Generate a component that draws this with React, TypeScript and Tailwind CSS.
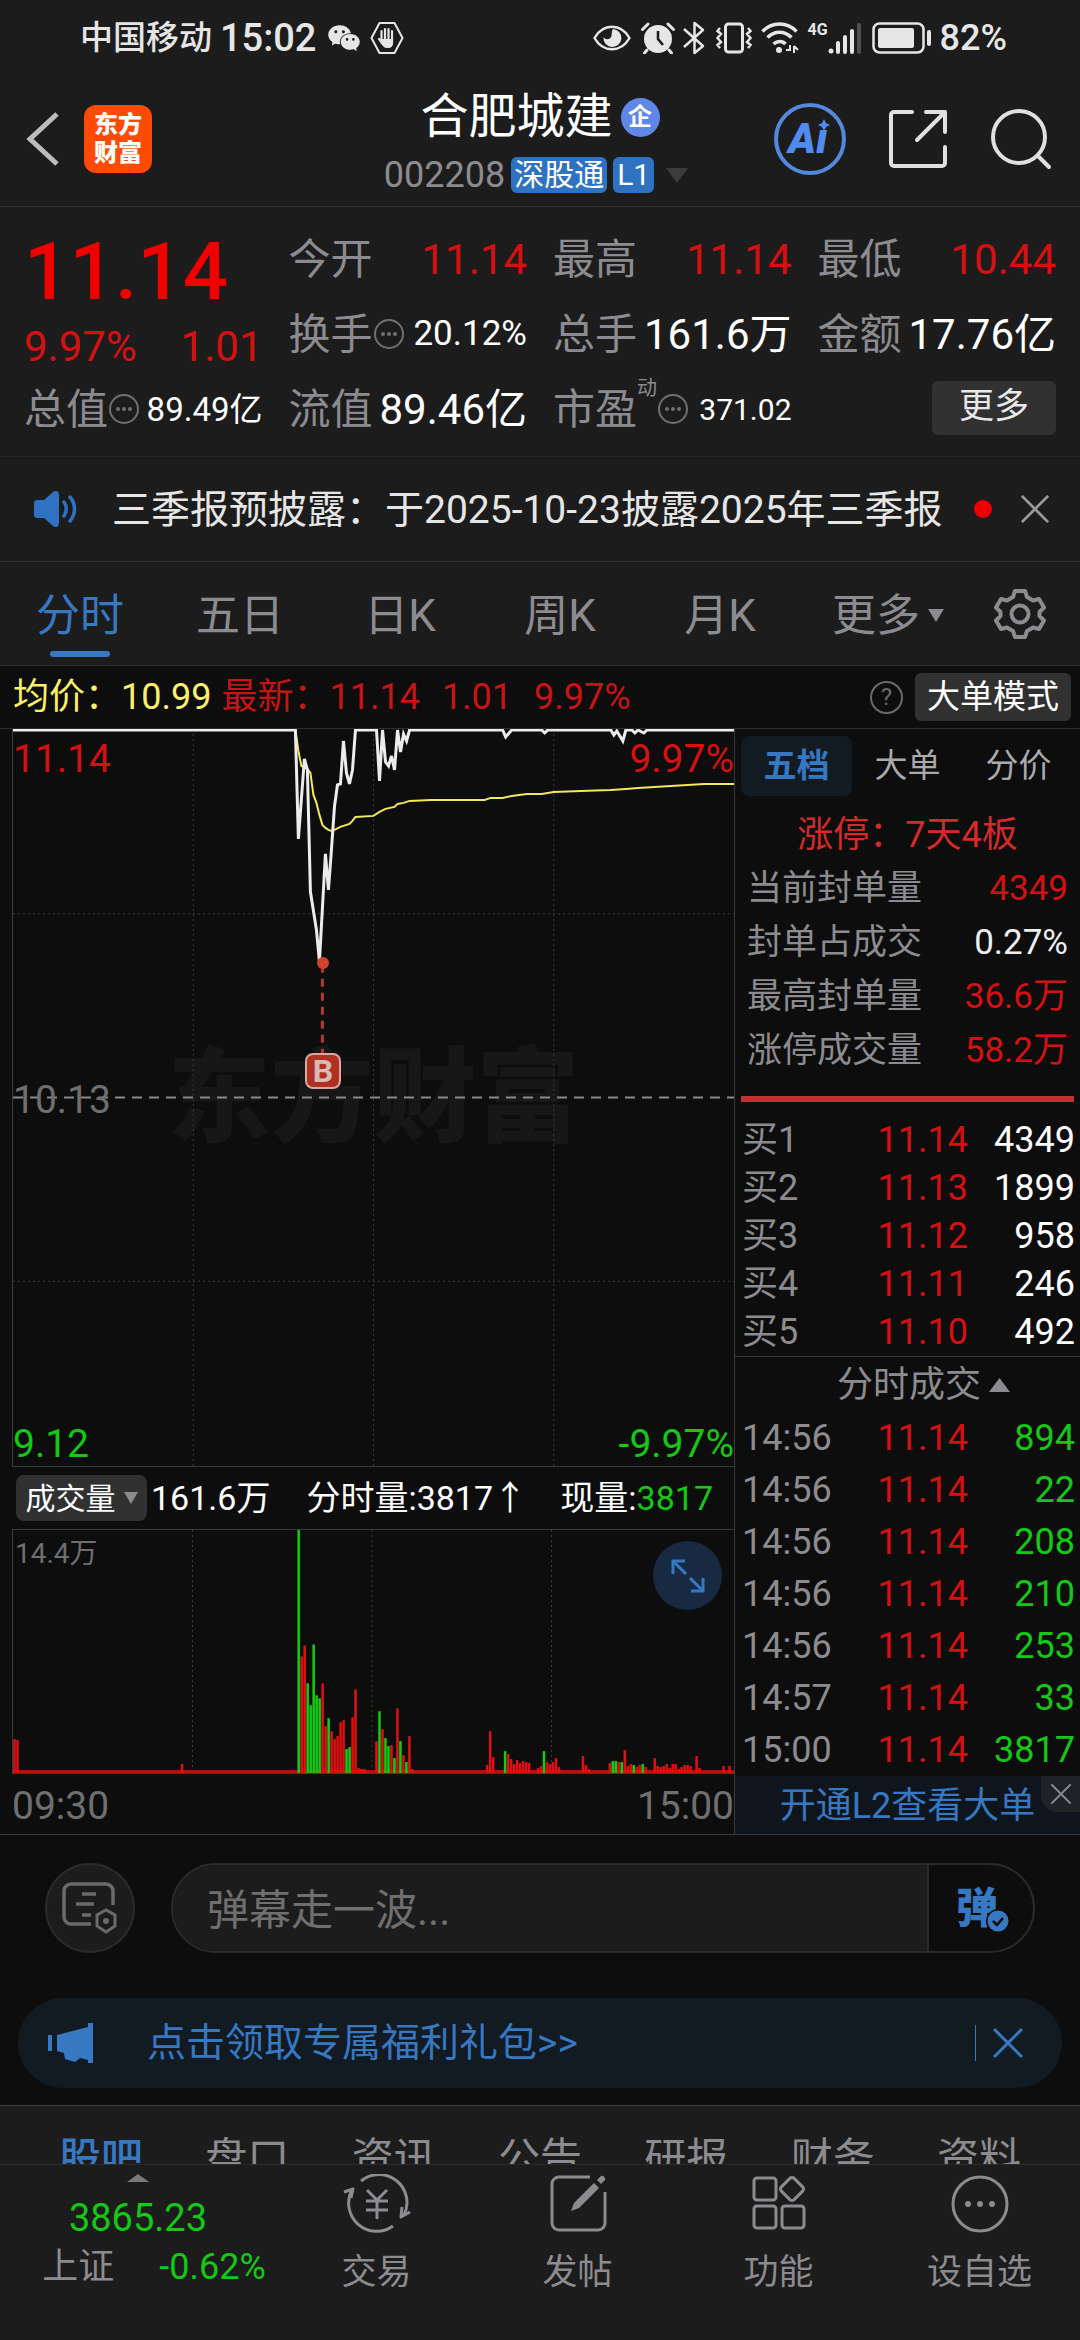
import type { ReactNode } from "react"
import { clsx } from "clsx"
import { AiFillWechat } from "react-icons/ai"

type Point = [number, number]
type Bar = [number, number, ("g" | "r")?]

// x = trading minute (0-240), y = offset from the top of the price pane
const PRICE: Point[] = [
  [0, 1], [94, 1], [95, 110], [97, 30], [98, 41], [99, 163], [101, 201], [102, 233], [104, 125], [105, 161],
  [106, 121], [107, 78], [108, 56], [109, 55], [110, 12], [111, 44], [112, 55], [113, 41], [114, 1], [121, 1],
  [122, 52], [123, 1], [124, 33], [125, 37], [126, 27], [127, 41], [128, 1], [129, 23], [130, 5], [131, 12],
  [132, 1], [163, 1], [164, 8], [166, 1], [176, 1], [177, 4], [178, 1], [199, 1], [200, 6], [201, 2],
  [203, 12], [204, 1], [206, 1], [207, 4], [208, 1], [210, 4], [211, 1], [240, 1],
]

const AVERAGE: Point[] = [
  [94, 1], [95, 22], [96, 37], [98, 40], [99, 44], [100, 66], [101, 74], [102, 86], [103, 96], [104, 99],
  [105, 101], [106, 102], [107, 101], [109, 98], [110, 97], [112, 95], [113, 92], [114, 88], [120, 87],
  [122, 83], [124, 80], [127, 78], [128, 75], [130, 74], [132, 72], [139, 71], [157, 71], [159, 69],
  [163, 69], [166, 67], [171, 65], [176, 65], [180, 63], [189, 62], [199, 61], [204, 60], [208, 59],
  [219, 57], [230, 55], [240, 55],
]

const VOLUME: Bar[] = [
  [0, 34], [1, 33], [56, 9], [95, 244, "g"], [96, 117], [97, 128], [98, 90, "g"], [99, 68, "g"], [100, 129, "g"],
  [101, 78, "g"], [102, 75, "g"], [103, 90], [104, 47], [105, 55, "g"], [106, 42], [107, 34], [108, 37],
  [109, 51], [110, 53], [111, 24, "g"], [112, 26, "g"], [113, 56], [114, 84], [115, 5], [116, 4], [117, 4],
  [121, 32], [122, 62, "g"], [123, 44], [124, 35, "g"], [125, 27, "g"], [126, 28], [127, 15, "g"], [128, 65],
  [129, 32, "g"], [130, 18], [131, 11, "g"], [132, 37], [133, 4], [158, 8], [159, 42], [160, 16], [164, 22, "g"],
  [165, 19], [166, 14], [167, 9], [168, 13], [169, 10], [170, 12], [171, 11], [172, 10], [175, 5], [176, 7],
  [177, 22, "g"], [178, 11], [179, 9], [180, 11], [181, 15], [182, 6], [190, 17], [191, 8], [192, 4], [199, 10],
  [200, 12, "g"], [201, 12, "g"], [202, 11], [203, 11, "g"], [204, 23], [205, 7], [206, 9], [207, 8, "g"],
  [208, 6], [209, 8], [210, 9, "g"], [211, 6], [214, 15], [215, 7], [216, 6], [217, 7], [218, 9], [219, 5],
  [220, 9], [221, 9], [222, 4], [223, 6], [224, 8], [225, 8], [226, 7], [228, 17], [229, 5], [237, 7], [239, 7],
]

const sealRows = [
  { label: "当前封单量", value: "4349", red: true },
  { label: "封单占成交", value: "0.27%", red: false },
  { label: "最高封单量", value: "36.6万", red: true },
  { label: "涨停成交量", value: "58.2万", red: true },
]

const bids = [
  ["买1", "11.14", "4349"],
  ["买2", "11.13", "1899"],
  ["买3", "11.12", "958"],
  ["买4", "11.11", "246"],
  ["买5", "11.10", "492"],
]

const trades = [
  ["14:56", "11.14", "894"],
  ["14:56", "11.14", "22"],
  ["14:56", "11.14", "208"],
  ["14:56", "11.14", "210"],
  ["14:56", "11.14", "253"],
  ["14:57", "11.14", "33"],
  ["15:00", "11.14", "3817"],
]

const periods = ["分时", "五日", "日K", "周K", "月K"]
const sections = ["股吧", "盘口", "资讯", "公告", "研报", "财务", "资料"]

const toPath = (points: Point[]) => points.map(([x, y], i) => `${i ? "L" : "M"}${x} ${y}`).join(" ")

const Triangle = ({ up, className }: { up?: boolean; className?: string }) => (
  <svg viewBox="0 0 20 14" preserveAspectRatio="none" className={className} fill="currentColor" aria-hidden="true">
    <path d={up ? "M10 0 20 14H0Z" : "M0 0h20L10 14Z"} />
  </svg>
)

const CloseIcon = ({ className }: { className?: string }) => (
  <svg viewBox="0 0 32 32" className={className} stroke="currentColor" strokeWidth="3" aria-hidden="true">
    <path d="M2 2 30 30M30 2 2 30" />
  </svg>
)

const MoreDots = () => (
  <svg viewBox="0 0 32 32" className="size-8 shrink-0 text-[#707073]" fill="none" aria-hidden="true">
    <circle cx="16" cy="15" r="14" stroke="currentColor" strokeWidth="2" />
    <g fill="currentColor">
      <circle cx="10" cy="15" r="2" />
      <circle cx="16" cy="15" r="2" />
      <circle cx="22" cy="15" r="2" />
    </g>
  </svg>
)

function StatusBar() {
  return (
    <div className="flex h-19 items-center justify-between pr-[73px] pl-20 text-[#e6e6e6]">
      <div className="flex items-center">
        <span className="text-[33px] font-medium">中国移动</span>
        <span className="ml-2 text-[38px] font-medium">15:02</span>
        <AiFillWechat className="ml-[10px] size-9" />
        <svg viewBox="0 0 34 34" className="ml-2 size-[34px]" aria-hidden="true">
          <path d="M9.500 2h15L32.500 17l-8 15h-15L1.500 17Z" fill="none" stroke="currentColor" strokeWidth="2" strokeLinejoin="round" />
          <path
            d="M11.500 10v10M15 8v12M18.500 8v12M22 10v10M9 18l4 5"
            stroke="currentColor"
            strokeWidth="2.200"
            strokeLinecap="round"
          />
          <path d="M10.400 18h12.700v4c0 3-2 5-5 5h-1c-3 0-4-2-6.700-5Z" fill="currentColor" />
        </svg>
      </div>
      <div className="flex items-center">
        <svg viewBox="0 0 38 26" className="h-[26px] w-[38px]" aria-hidden="true">
          <path d="M1.500 13C10-2 28-2 36.500 13 28 28 10 28 1.500 13Z" fill="none" stroke="currentColor" strokeWidth="2.500" />
          <path d="M20 4a9 9 0 1 1-9.500 8c2 3 6 3 7.500 0s0-5 2-8Z" fill="currentColor" />
        </svg>
        <svg viewBox="0 0 34 32" className="ml-[10px] h-8 w-[34px]" aria-hidden="true">
          <circle cx="17" cy="17" r="14" fill="currentColor" />
          <path d="M1.500 7.500 7 2M32.500 7.500 27 2M6 28l-2.500 3M28 28l2.500 3" stroke="currentColor" strokeWidth="3" strokeLinecap="round" />
          <path d="M17 9v8l5 6" fill="none" stroke="#1c1c1c" strokeWidth="2.500" />
        </svg>
        <svg viewBox="0 0 22 34" className="ml-2 h-[34px] w-[22px]" fill="none" stroke="currentColor" strokeWidth="2.500" strokeLinejoin="round" aria-hidden="true">
          <path d="m1 8 19 17-8.500 7V2L20 9 1 26" />
        </svg>
        <svg viewBox="0 0 38 32" className="ml-[10px] h-8 w-[38px]" fill="none" stroke="currentColor" aria-hidden="true">
          <rect x="10.500" y="2" width="17" height="28" rx="3" strokeWidth="3" />
          <path d="M5 6 2.500 9 6 12l-3.500 4L6 20l-3.500 3L5 26M33 6l2.500 3L32 12l3.500 4L32 20l3.500 3L33 26" strokeWidth="2.500" />
        </svg>
        <svg viewBox="0 0 38 32" className="ml-2 h-8 w-[38px]" fill="none" stroke="currentColor" strokeWidth="3.500" aria-hidden="true">
          <path d="M1.500 9.500C11-.5 26-.5 35.500 9.500M6.500 15.500c7-7 17-7 24 0M12.500 22c4-3.500 9-3.500 12 0" />
          <circle cx="18" cy="28" r="3" fill="currentColor" stroke="none" />
          <path d="M25 28h4v-5M33 24v7M33 24l4 4" strokeWidth="2" />
        </svg>
        <span className="mb-4 ml-2 text-base font-bold">4G</span>
        <svg viewBox="0 0 34 32" className="h-8 w-[34px]" fill="currentColor" aria-hidden="true">
          <circle cx="3" cy="29" r="2.500" />
          <rect x="8" y="19" width="4" height="13" rx="2" />
          <rect x="15" y="13" width="4" height="19" rx="2" />
          <rect x="22" y="7" width="4" height="25" rx="2" />
          <rect x="29" y="1" width="4" height="31" rx="2" opacity=".25" />
        </svg>
        <svg viewBox="0 0 60 32" className="ml-[10px] h-8 w-[60px]" aria-hidden="true">
          <rect x="1.500" y="1.500" width="50" height="29" rx="6" fill="none" stroke="currentColor" strokeWidth="2.500" />
          <rect x="6" y="6" width="36" height="20" rx="2" fill="currentColor" />
          <rect x="55" y="8" width="4" height="16" rx="2" fill="currentColor" />
        </svg>
        <span className="ml-2 text-4xl font-medium">82%</span>
      </div>
    </div>
  )
}

function Header() {
  return (
    <header className="grid h-[131px] grid-cols-3 border-b border-[#2f2f2f]">
      <div className="flex items-center gap-6 pb-1 pl-6">
        <button aria-label="返回" className="text-[#bdbdbd]">
          <svg viewBox="0 0 36 58" className="h-[58px] w-9" fill="none" stroke="currentColor" strokeWidth="5">
            <path d="M33 4 6 29 33 54" />
          </svg>
        </button>
        <div className="flex h-[68px] w-[68px] items-center justify-center rounded-xl bg-[#ff4a03] text-center text-2xl leading-7 font-black text-white">
          东方
          <br />
          财富
        </div>
      </div>
      <div className="flex flex-col items-center pt-[9px]">
        <h1 className="flex items-center gap-2 text-5xl leading-16 font-normal text-white">
          合肥城建
          <span className="flex size-[39px] items-center justify-center rounded-full bg-[#5f87e8] text-2xl leading-none font-bold">
            企
          </span>
        </h1>
        <div className="flex items-center gap-[6px] pr-2 leading-[52px] whitespace-nowrap">
          <span className="text-4xl leading-[52px] text-[#8c8c90]">002208</span>
          <span className="rounded-md bg-[#2f72c2] px-[3px] text-[30px] leading-9 text-white">深股通</span>
          <span className="rounded-md bg-[#2f72c2] px-1 text-[30px] leading-9 text-white">L1</span>
          <Triangle className="ml-[6px] h-[15px] w-[22px] text-[#3c3c3c]" />
        </div>
      </div>
      <div className="flex items-center justify-end gap-[42px] pr-7 pb-1">
        <button
          aria-label="Ai"
          className="relative flex size-[72px] items-center justify-center rounded-full border-[4px] border-[#5488dc] text-[#508cf0]"
        >
          <span className="pr-1 text-[42px] leading-none font-black italic">Aı</span>
          <svg viewBox="0 0 12 12" className="absolute top-3 right-3 size-3" fill="currentColor">
            <path d="M6 0 8 4 12 6 8 8 6 12 4 8 0 6 4 4Z" />
          </svg>
        </button>
        <button aria-label="分享" className="text-[#e0e0e0]">
          <svg viewBox="0 0 60 60" className="size-[60px]" fill="none" stroke="currentColor" strokeWidth="4" strokeLinecap="round" strokeLinejoin="round">
            <path d="M24 3H6a3 3 0 0 0-3 3v48a3 3 0 0 0 3 3h48a3 3 0 0 0 3-3V38M38 3h19v20M56 4 29 31" />
          </svg>
        </button>
        <button aria-label="搜索" className="text-[#e0e0e0]">
          <svg viewBox="0 0 62 62" className="size-[62px]" fill="none" stroke="currentColor" strokeWidth="4" strokeLinecap="round">
            <circle cx="29" cy="29" r="26" />
            <path d="m48 48 11 11" />
          </svg>
        </button>
      </div>
    </header>
  )
}

function Quote({ label, value, dots, sup, className }: { label: string; value: string; dots?: boolean; sup?: string; className: string }) {
  return (
    <dl className="flex items-center justify-between whitespace-nowrap">
      <dt className="relative flex items-center text-[42px] text-[#8c8c90]">
        {label}
        {sup && <sup className="absolute top-0 left-[84px] text-xl leading-none">{sup}</sup>}
        {dots && <span className={sup ? "pl-5" : ""}><MoreDots /></span>}
      </dt>
      <dd className={className}>{value}</dd>
    </dl>
  )
}

function QuotePanel() {
  return (
    <section className="grid auto-rows-[75px] grid-cols-4 gap-x-[26px] border-b border-[#262626] px-6 pt-[15px] pb-[9px]">
      <div className="row-span-2 flex flex-col justify-end text-[#d41111]">
        <strong className="text-[80px] leading-[100px] font-medium text-[#f20000]">11.14</strong>
        <p className="flex justify-between text-[42px] leading-[50px]">
          <span>9.97%</span>
          <span>1.01</span>
        </p>
      </div>
      <Quote label="今开" value="11.14" className="text-[42px] text-[#d41111]" />
      <Quote label="最高" value="11.14" className="text-[42px] text-[#d41111]" />
      <Quote label="最低" value="10.44" className="text-[42px] text-[#d41111]" />
      <Quote label="换手" value="20.12%" dots className="text-[35px] text-white" />
      <Quote label="总手" value="161.6万" className="text-[42px] text-white" />
      <Quote label="金额" value="17.76亿" className="text-[42px] text-white" />
      <Quote label="总值" value="89.49亿" dots className="text-[33px] text-white" />
      <Quote label="流值" value="89.46亿" className="text-[42px] text-white" />
      <Quote label="市盈" value="371.02" dots sup="动" className="text-[30px] text-white" />
      <div className="flex items-center justify-end pb-1">
        <button className="h-[54px] w-31 rounded-md bg-[#313131] text-[35px] text-[#e8e8e8]">更多</button>
      </div>
    </section>
  )
}

function Notice() {
  return (
    <div className="flex h-[105px] items-center border-b border-[#2f2f2f] pr-[30px] pl-8">
      <svg viewBox="0 0 48 38" className="h-[38px] w-12 text-[#2f72c2]" fill="none" aria-hidden="true">
        <path d="M6 10h6L21 2c3-2 6-1 6 3v28c0 4-3 5-6 3l-9-8H6c-3 0-4-1-4-4V14c0-3 1-4 4-4Z" fill="currentColor" />
        <path d="M32 12c3 4 3 10 0 14M38 7c6 7 6 17 0 24" stroke="currentColor" strokeWidth="3.500" strokeLinecap="round" />
      </svg>
      <a href="#notice" className="ml-8 flex-1 pt-[2px] text-[39px] whitespace-nowrap text-[#e6e6e6]">
        三季报预披露：于2025-10-23披露2025年三季报
      </a>
      <span className="size-[18px] rounded-full bg-[#ee0000]" />
      <button aria-label="关闭" className="ml-7 text-[#9a9a9a]">
        <CloseIcon className="size-[30px]" />
      </button>
    </div>
  )
}

function PeriodTabs() {
  return (
    <nav className="flex h-[104px] border-b border-[#2f2f2f] pt-1 text-[44px] text-[#8c8c90]">
      {periods.map((period, i) => (
        <button key={period} className={clsx("relative flex-4", i === 0 && "text-[#3778c2]")}>
          {period}
          {i === 0 && <span className="absolute bottom-2 left-1/2 h-[6px] w-15 -translate-x-1/2 rounded-full bg-[#3778c2]" />}
        </button>
      ))}
      <button className="flex flex-4 items-center justify-center">
        <span className="ml-4">更多</span>
        <Triangle className="ml-2 h-[13px] w-4" />
      </button>
      <button aria-label="设置" className="flex flex-3 items-center justify-center">
        <svg viewBox="0 0 52 52" className="mb-1 size-[52px]" fill="none" stroke="currentColor" strokeWidth="4" strokeLinejoin="round">
          <path d="M21 3h10l2 6 6 3.500 6-1.500 5 8.500-4.500 4.500v4l4.500 4.500-5 8.500-6-1.500-6 3.500-2 6H21l-2-6-6-3.500L7 41l-5-8.500L6.500 28v-4L2 19.500 7 11l6 1.500L19 9Z" />
          <circle cx="26" cy="26" r="8.500" />
        </svg>
      </button>
    </nav>
  )
}

function PriceSummary() {
  return (
    <div className="flex h-[63px] items-center border-b border-[#2f2f2f] pr-[9px] pl-[13px] text-4xl whitespace-nowrap text-[#c81414]">
      <span className="text-[#fdf06a]">均价：10.99</span>
      <span className="ml-[10px]">最新：11.14</span>
      <span className="ml-[22px]">1.01</span>
      <span className="ml-[22px]">9.97%</span>
      <button aria-label="说明" className="ml-auto flex size-[33px] items-center justify-center rounded-full border-2 border-[#6a6a6a] text-2xl text-[#6a6a6a]">
        ?
      </button>
      <button className="ml-3 h-12 w-39 rounded-md bg-[#313131] text-[33px] text-white">大单模式</button>
    </div>
  )
}

const GridColumns = ({ height }: { height: number }) => (
  <path
    d={`M60 0V${height}M120 0V${height}M180 0V${height}`}
    stroke="#3b3b3b"
    strokeDasharray="2 3"
    vectorEffect="non-scaling-stroke"
  />
)

function PriceChart() {
  return (
    <div className="relative h-[738px] border-b border-l border-[#3b3b3b]">
      <div className="absolute inset-0 flex items-center justify-center pt-1 text-[103px] font-black text-[#171717]">东方财富</div>
      <svg viewBox="0 0 240 738" preserveAspectRatio="none" className="absolute inset-0 size-full" fill="none" role="img" aria-label="分时走势">
        <GridColumns height={738} />
        <path d="M0 185H240M0 553H240" stroke="#3b3b3b" strokeDasharray="2 3" vectorEffect="non-scaling-stroke" />
        <path d="M0 369H240" stroke="#8a8a8a" strokeWidth="2" strokeDasharray="10 7" vectorEffect="non-scaling-stroke" />
        <path d={toPath(AVERAGE)} stroke="#f3e75c" strokeWidth="2" vectorEffect="non-scaling-stroke" />
        <path d={toPath(PRICE)} stroke="#ececec" strokeWidth="3" vectorEffect="non-scaling-stroke" />
        <path d="M103 236V325" stroke="#b33a2a" strokeWidth="3" strokeDasharray="8 6" vectorEffect="non-scaling-stroke" />
      </svg>
      {/* buy marker */}
      <span className="absolute top-[228px] left-[43%] size-3 -translate-x-1/2 rounded-full bg-[#d2432f]" />
      <span className="absolute top-[324px] left-[43%] flex size-9 -translate-x-1/2 items-center justify-center rounded-lg border-2 border-[#d8a8a2] bg-[#b2301f] text-[32px] leading-none font-bold text-[#d9b9b5]">
        B
      </span>
      <span className="absolute top-2 left-0 text-[39px] leading-11 text-[#d41111]">11.14</span>
      <span className="absolute top-2 right-0 text-[39px] leading-11 text-[#d41111]">9.97%</span>
      <span className="absolute top-1/2 left-0 -translate-y-1/2 pt-1 text-[39px] leading-11 text-[#6f6f6f]">10.13</span>
      <span className="absolute bottom-0 left-0 text-[39px] leading-11 text-[#14c814]">9.12</span>
      <span className="absolute right-0 bottom-0 text-[39px] leading-11 text-[#14c814]">-9.97%</span>
    </div>
  )
}

function VolumeChart() {
  return (
    <>
      <div className="flex h-[62px] items-center text-[34px] whitespace-nowrap text-white">
        <button className="ml-1 flex h-[46px] w-[131px] items-center justify-center gap-2 rounded-lg bg-[#313131] text-[30px]">
          成交量
          <Triangle className="h-3 w-[14px] text-[#8c8c90]" />
        </button>
        <span className="ml-1">161.6万</span>
        <span className="ml-9">分时量:3817↑</span>
        <span className="mr-[21px] ml-auto">
          现量:<span className="text-[#14c814]">3817</span>
        </span>
      </div>
      <div className="relative h-[245px] border-y border-t-[#3b3b3b] border-b-[#a01010] border-l border-l-[#3b3b3b]">
        <svg viewBox="0 0 241 244" preserveAspectRatio="none" className="absolute inset-0 size-full" role="img" aria-label="成交量">
          <GridColumns height={244} />
          <rect y="241" width="241" height="3" fill="#b41212" />
          {VOLUME.map(([minute, height, tone]) => (
            <rect
              key={minute}
              x={minute + 0.08}
              y={244 - height}
              width="0.84"
              height={height}
              fill={tone === "g" ? "#14cc14" : "#e01010"}
            />
          ))}
        </svg>
        <span className="absolute top-1 left-[2px] text-[28px] leading-10 text-[#6f6f6f]">14.4万</span>
        <button aria-label="全屏" className="absolute top-[11px] right-3 flex size-[69px] items-center justify-center rounded-full bg-[#172a42] text-[#3778c2]">
          <svg viewBox="0 0 36 36" className="size-9" fill="none" stroke="currentColor" strokeWidth="3">
            <path d="M15 3H3v13M3 3l13 13M21 33h12V20M33 33 20 20" />
          </svg>
        </button>
      </div>
      <div className="flex h-15 items-center justify-between pt-1 text-[39px] text-[#6f6f6f]">
        <span>09:30</span>
        <span>15:00</span>
      </div>
    </>
  )
}

function OrderBook() {
  return (
    <aside className="flex w-[346px] shrink-0 flex-col border-l border-[#3b3b3b] text-4xl">
      <div className="mt-[7px] flex h-15 px-[6px] text-[33px] text-[#aaaaaa]">
        <button className="flex-1 rounded-lg bg-[#121a22] font-bold text-[#3778c2]">五档</button>
        <button className="flex-1">大单</button>
        <button className="flex-1">分价</button>
      </div>
      <p className="mt-3 text-center leading-[54px] text-[#d42a2a]">涨停：7天4板</p>
      <dl className="px-3 text-[35px] leading-[54px]">
        {sealRows.map(({ label, value, red }) => (
          <div key={label} className="flex justify-between">
            <dt className="text-[#8c8c90]">{label}</dt>
            <dd className={red ? "text-[#d41111]" : "text-[#eeeeee]"}>{value}</dd>
          </div>
        ))}
      </dl>
      <div className="mx-[6px] mt-[18px] h-[6px] bg-[#bd3434]" />
      <table className="mt-[14px] w-full table-fixed leading-12">
        <tbody>
          {bids.map(([label, price, amount]) => (
            <tr key={label}>
              <th className="w-25 pl-[7px] text-left font-normal text-[#8c8c90]">{label}</th>
              <td className="pr-1 text-right text-[#d41111]">{price}</td>
              <td className="w-27 pr-[5px] text-right text-white">{amount}</td>
            </tr>
          ))}
        </tbody>
      </table>
      <button className="flex h-14 items-center justify-center gap-2 border-t border-[#3b3b3b] pl-8 text-[#8c8c90]">
        分时成交
        <Triangle up className="h-[14px] w-[21px]" />
      </button>
      <table className="w-full table-fixed leading-[52px]">
        <tbody>
          {trades.map(([time, price, amount], i) => (
            <tr key={i}>
              <td className="w-25 pl-[7px] text-[#8c8c90]">{time}</td>
              <td className="pr-1 text-right text-[#d41111]">{price}</td>
              <td className="w-27 pr-[5px] text-right text-[#14c814]">{amount}</td>
            </tr>
          ))}
        </tbody>
      </table>
      <div className="relative flex flex-1 items-center bg-[#0f151c]">
        <a href="#l2" className="flex-1 pt-[2px] text-center leading-[54px] text-[#3778c2]">开通L2查看大单</a>
        <button aria-label="关闭" className="absolute top-0 right-0 flex h-9 w-[39px] items-center justify-center rounded-bl-2xl bg-[#1e2328] text-[#8c8c90]">
          <CloseIcon className="size-[22px]" />
        </button>
      </div>
    </aside>
  )
}

function CommentBar() {
  return (
    <form className="flex gap-9 pt-7 pr-[45px] pl-[45px]">
      <button type="button" aria-label="弹幕设置" className="flex size-[90px] shrink-0 items-center justify-center rounded-full border-2 border-[#2a2a2a] bg-[#1c1c1c] text-[#6a6a6a]">
        <svg viewBox="0 0 56 52" className="h-[52px] w-14" fill="none" stroke="currentColor" strokeWidth="3.500">
          <path d="M51 23V9a7 7 0 0 0-7-7H9a7 7 0 0 0-7 7v26a7 7 0 0 0 7 7h20M20 12h14M14 22h18M20 33h9" />
          <path d="m44 28 9 5v11l-9 6-9-6V33Z" strokeWidth="3" />
          <circle cx="44" cy="39" r="3" fill="currentColor" stroke="none" />
        </svg>
      </button>
      <div className="flex h-[90px] flex-1 overflow-hidden rounded-full border-2 border-[#2a2a2a]">
        <input
          aria-label="弹幕"
          placeholder="弹幕走一波..."
          className="min-w-0 flex-1 bg-[#1c1c1c] pt-1 pl-[34px] text-[42px] text-white placeholder:text-[#6f6f6f]"
        />
        <button type="button" className="w-[106px] border-l-2 border-[#2a2a2a] pr-2 text-[42px] font-black text-[#3778c2]">
          <span className="relative">
            弹
            <svg viewBox="0 0 24 24" className="absolute -right-3 bottom-0 size-6" aria-hidden="true">
              <circle cx="12" cy="12" r="12" fill="#0d0d0d" />
              <circle cx="12" cy="12" r="10.500" fill="currentColor" />
              <path d="m7 12 4 4 6-7" fill="none" stroke="#0d0d0d" strokeWidth="2.500" />
            </svg>
          </span>
        </button>
      </div>
    </form>
  )
}

function GiftBanner() {
  return (
    <div className="mx-[18px] mt-[45px] mb-[17px] flex h-[90px] items-center rounded-full bg-[#121a22] pr-[38px] pl-[30px] text-[#3778c2]">
      <svg viewBox="0 0 46 40" className="h-10 w-[46px]" fill="currentColor" aria-hidden="true">
        <path d="M0 12h4v16H0ZM9 12 40 4V0h5v40h-5v-3l-8-2-5 4-10-3-1-6-7-2Z" />
      </svg>
      <a href="#gift" className="ml-[53px] flex-1 text-[39px]">点击领取专属福利礼包&gt;&gt;</a>
      <span className="mr-4 h-9 w-px bg-[#3778c2]" />
      <button aria-label="关闭">
        <CloseIcon className="size-8" />
      </button>
    </div>
  )
}

const NavItem = ({ label, children }: { label: string; children: ReactNode }) => (
  <button className="flex w-[201px] flex-col items-center pt-[9px] text-[35px] leading-[50px] text-[#8c8c90]">
    <svg viewBox="0 0 68 60" className="mb-[14px] h-15 w-[68px]" fill="none" stroke="currentColor" strokeWidth="3" strokeLinejoin="round">
      {children}
    </svg>
    {label}
  </button>
)

function BottomBar() {
  return (
    <footer className="flex flex-1 border-t border-[#2a2a2a]">
      <button className="flex flex-1 flex-col items-center pt-[9px] text-4xl text-[#14c814]">
        <Triangle up className="h-2 w-[22px] text-[#7a7a7a]" />
        <span className="mt-3 text-[38px] leading-12">3865.23</span>
        <span className="flex gap-[45px] pl-8 leading-[50px]">
          <span className="text-[#8c8c90]">上证</span>
          <span>-0.62%</span>
        </span>
      </button>
      <NavItem label="交易">
        <path d="M18 7a28 28 0 0 1 43 34M50 52A28 28 0 0 1 9 16M1 18l9-3-2 9M67 38l-9 5 1-10" />
        <path d="m24 16 10 10 10-10M23 27h22M23 36h22M34 26v19" />
      </NavItem>
      <NavItem label="发帖">
        <path d="M46 3H15a7 7 0 0 0-7 7v39a7 7 0 0 0 7 7h39a7 7 0 0 0 7-7V18" />
        <path d="m27 37 3-8 20-20 5 5-20 20ZM53 6l4-4c2-1 5 2 4 4l-4 4Z" fill="currentColor" stroke="none" />
      </NavItem>
      <NavItem label="功能">
        <rect x="9" y="4" width="22" height="22" rx="3" />
        <rect x="9" y="32" width="22" height="22" rx="3" />
        <rect x="37" y="32" width="22" height="22" rx="3" />
        <rect x="38" y="6" width="18" height="18" rx="3" transform="rotate(45 47 15)" />
      </NavItem>
      <NavItem label="设自选">
        <circle cx="34" cy="30" r="27" />
        <g fill="currentColor" stroke="none">
          <circle cx="22" cy="30" r="3" />
          <circle cx="34" cy="30" r="3" />
          <circle cx="46" cy="30" r="3" />
        </g>
      </NavItem>
    </footer>
  )
}

export default function App() {
  return (
    <div className="flex min-h-screen flex-col bg-[#1c1c1c] font-[Roboto,'Noto_Sans_CJK_SC',sans-serif]">
      <StatusBar />
      <Header />
      <QuotePanel />
      <Notice />
      <PeriodTabs />
      <main className="bg-[#0d0d0d]">
        <PriceSummary />
        <div className="flex border-b border-[#3b3b3b]">
          <div className="min-w-0 flex-1 pl-3">
            <PriceChart />
            <VolumeChart />
          </div>
          <OrderBook />
        </div>
        <CommentBar />
        <GiftBanner />
      </main>
      <nav className="flex h-[59px] justify-between overflow-hidden border-t border-[#3b3b3b] px-[59px] text-[42px] leading-[106px] text-[#8c8c90]">
        {sections.map((name, i) => (
          <a key={name} href={`#section-${i}`} className={i === 0 ? "font-medium text-[#3778c2]" : ""}>
            {name}
          </a>
        ))}
      </nav>
      <BottomBar />
    </div>
  )
}
